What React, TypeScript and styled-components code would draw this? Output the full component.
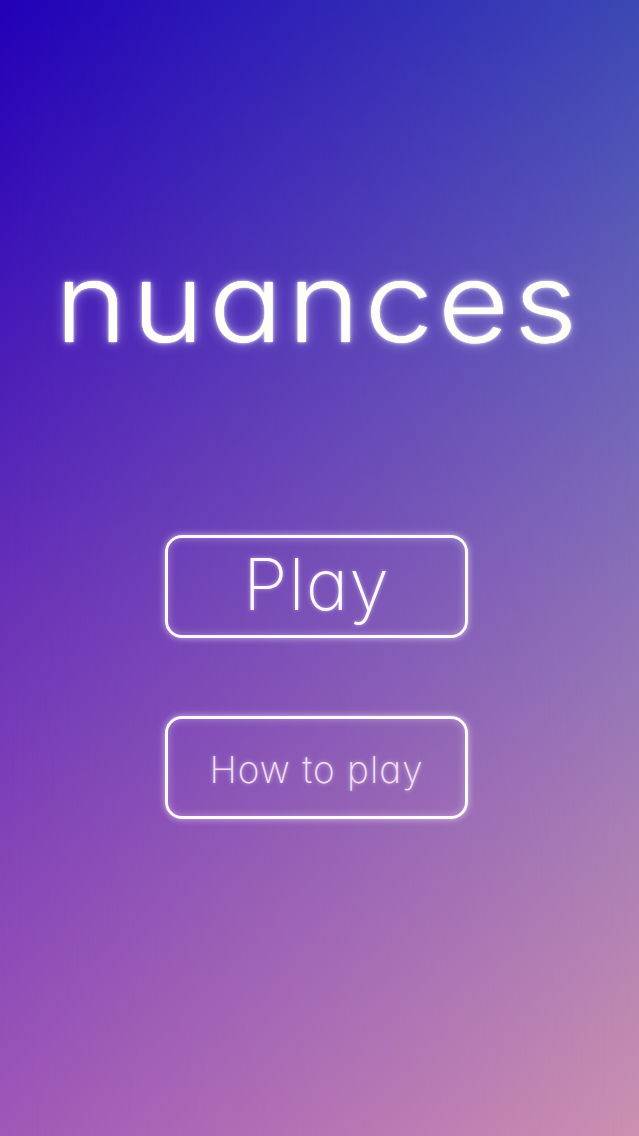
import React from 'react';
import styled, { createGlobalStyle } from 'styled-components';

const GlobalStyle = createGlobalStyle`
  html, body {
    margin: 0;
    padding: 0;
  }

  body {
    font-family: Inter, 'Liberation Sans', sans-serif;
    background: #6630b8;
  }
`;

const Screen = styled.main`
  position: relative;
  min-height: 1136px;
  overflow: hidden;
  background: linear-gradient(to bottom, #2200b8 0%, #4418b8 26%, #6630b8 51%, #8444b8 75%, #a058b8 100%);

  /* right-hand colour column, faded in towards the right edge */
  &::before {
    content: '';
    position: absolute;
    inset: 0;
    background: linear-gradient(to bottom, #3c48b4 0%, #6460b8 26%, #8a70b8 51%, #ac80b4 75%, #cc90b0 100%);
    -webkit-mask-image: linear-gradient(to right, transparent 0%, black 100%);
    mask-image: linear-gradient(to right, transparent 0%, black 100%);
  }
`;

const Content = styled.div`
  position: relative;
  display: flex;
  flex-direction: column;
  align-items: center;
  padding: 247px 6px 0 0;
`;

const Title = styled.h1`
  margin: 0;
  font-size: 110px;
  line-height: 1;
  font-weight: 300;
  font-feature-settings: 'cv11' 1;
  letter-spacing: 4px;
  margin-right: -4px;
  transform: scaleX(1.12);
  color: #fffdf8;
  text-shadow: 0 0 1px #fff, 0 0 4px rgba(255, 255, 255, 0.8), 0 0 12px rgba(255, 255, 255, 0.45);
`;

const Menu = styled.nav`
  display: flex;
  flex-direction: column;
  gap: 78px;
  margin-top: 178px;
`;

const MenuButton = styled.button<{ $size: number; $dim?: boolean }>`
  box-sizing: border-box;
  width: 303px;
  height: 103px;
  display: flex;
  align-items: center;
  justify-content: center;
  padding: ${({ $dim }) => ($dim ? '4px 0 0' : '0 0 6px')};
  background: transparent;
  border: 3px solid #fff8fc;
  border-radius: 17px;
  box-shadow: 0 0 7px rgba(255, 255, 255, 0.6), inset 0 0 8px rgba(255, 255, 255, 0.35);
  font-family: Inter, 'Liberation Sans', sans-serif;
  font-size: ${({ $size }) => $size}px;
  font-weight: 250;
  font-feature-settings: 'cv11' 1;
  letter-spacing: 1px;
  color: ${({ $dim }) => ($dim ? '#f3e0f2' : '#fff8fc')};
  text-shadow: 0 0 4px rgba(255, 255, 255, 0.5);
  cursor: pointer;
`;

export default function App() {
  return (
    <>
      <GlobalStyle />
      <Screen>
        <Content>
          <Title>nuances</Title>
          <Menu>
            <MenuButton $size={72}>Play</MenuButton>
            <MenuButton $size={37} $dim>
              How to play
            </MenuButton>
          </Menu>
        </Content>
      </Screen>
    </>
  );
}
